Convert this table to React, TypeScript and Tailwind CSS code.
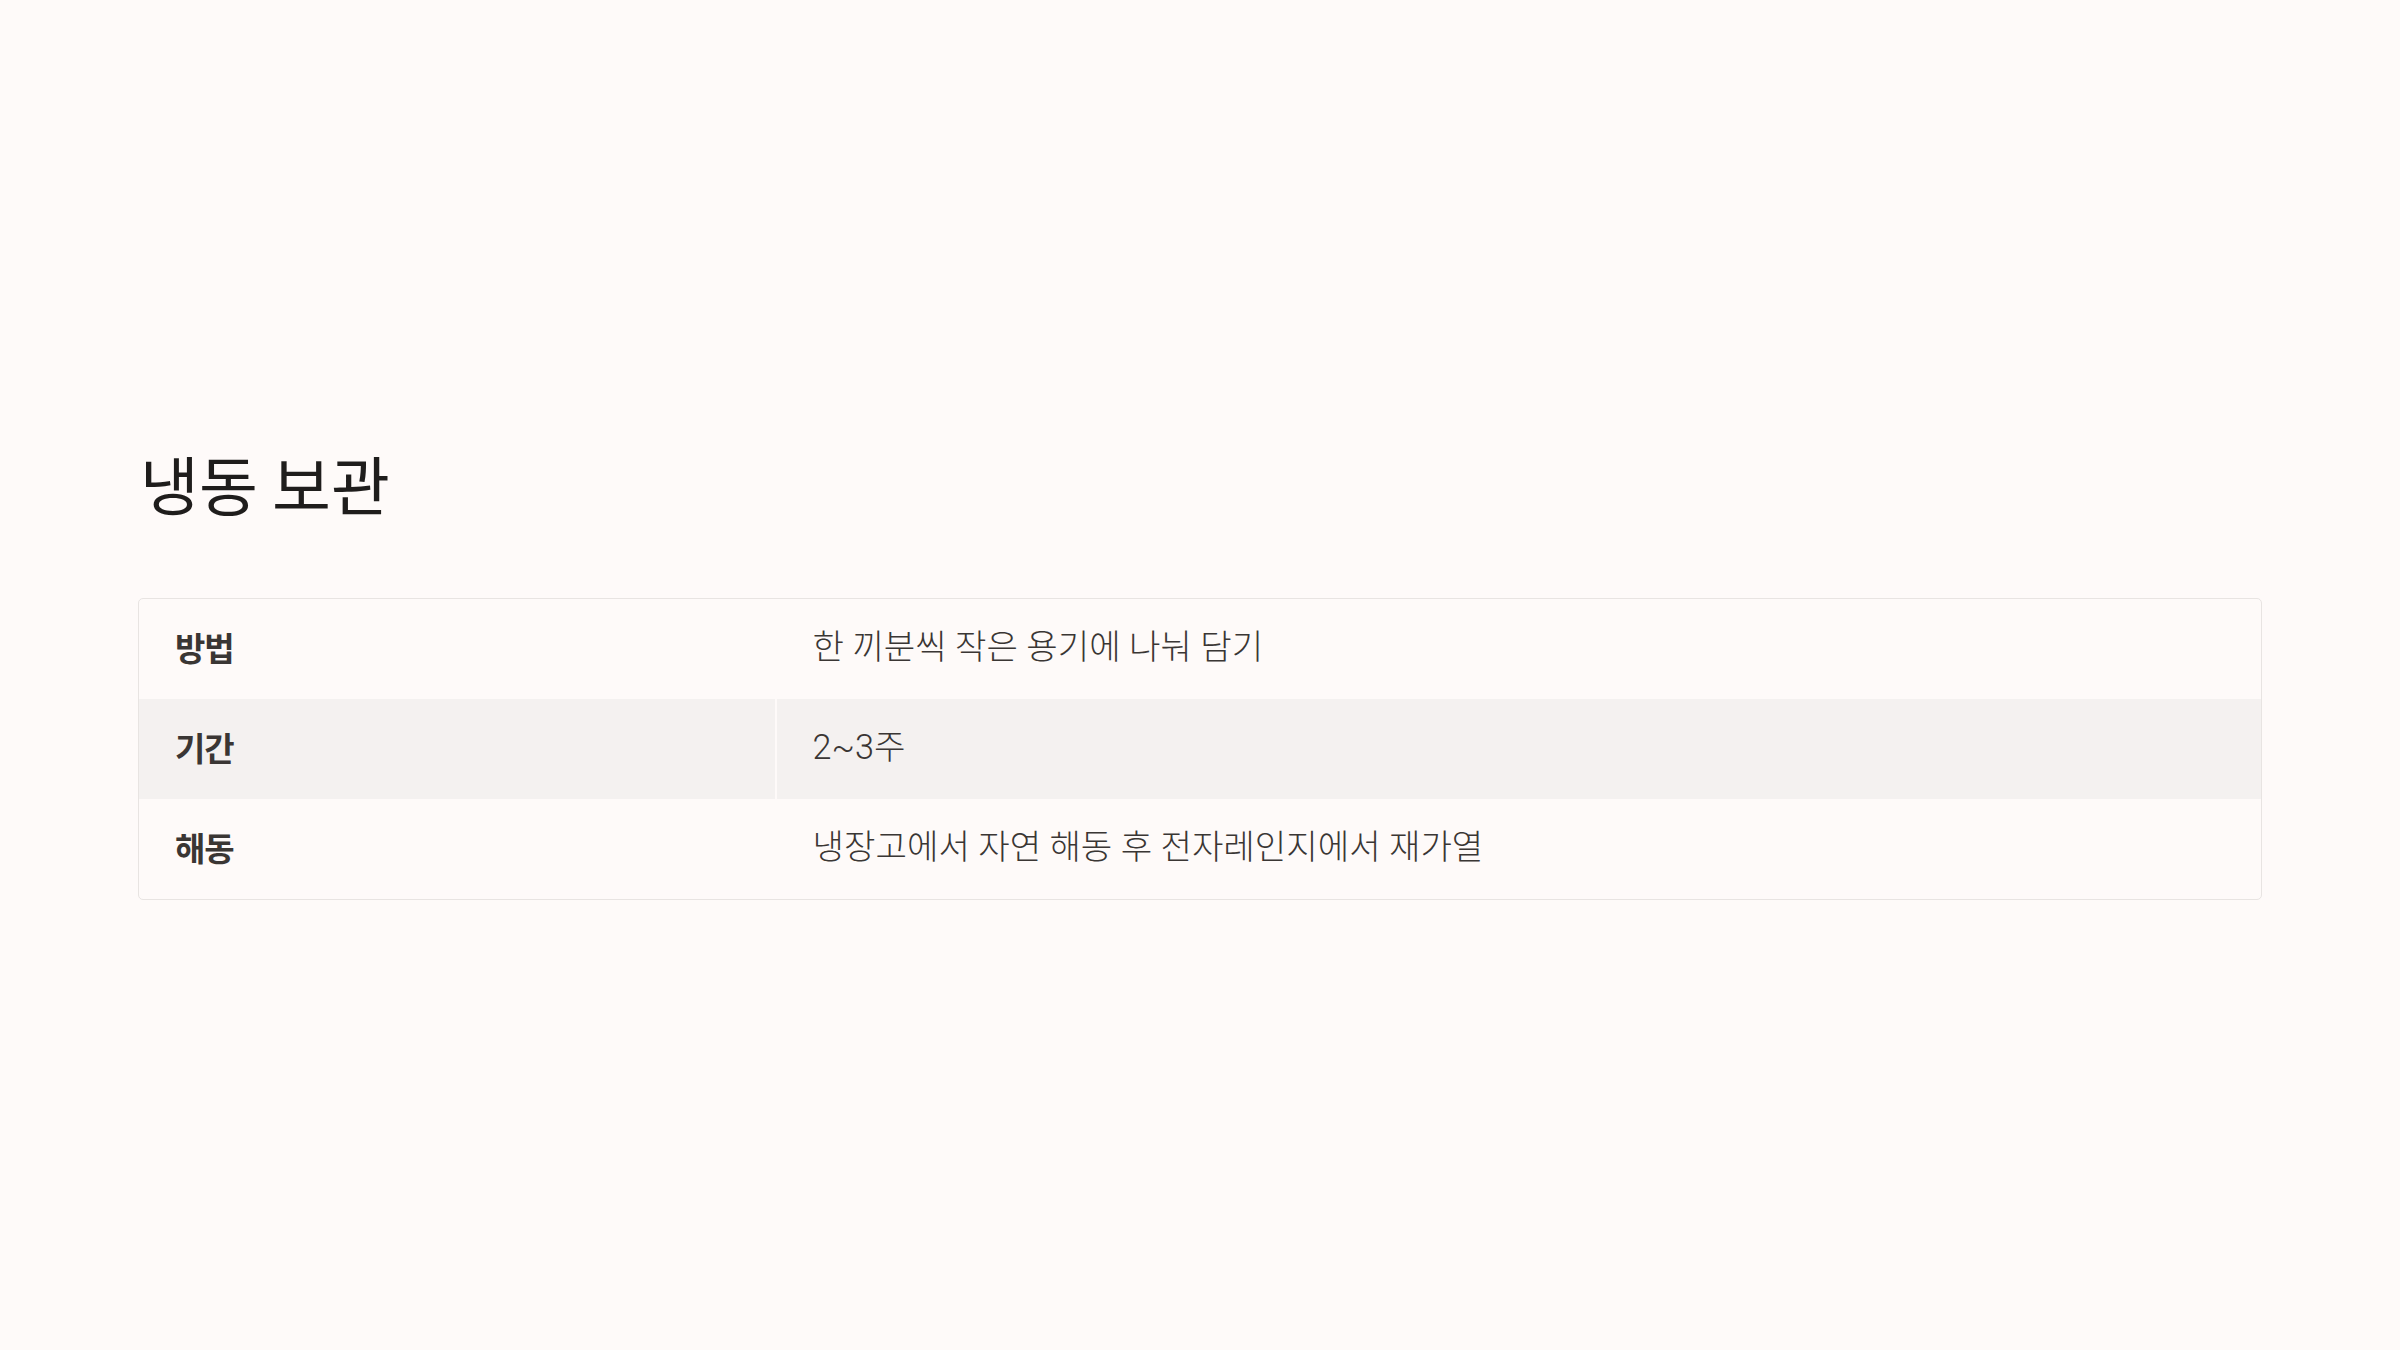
import React from "react";

const rows = [
  { label: "방법", value: "한 끼분씩 작은 용기에 나눠 담기" },
  { label: "기간", value: "2~3주" },
  { label: "해동", value: "냉장고에서 자연 해동 후 전자레인지에서 재가열" },
];

export default function App() {
  return (
    <div
      className="min-h-screen w-full bg-[#fefaf9] flex flex-col justify-center px-[138px] pb-[6px]"
      style={{ fontFamily: '"Noto Sans CJK KR", "Noto Sans", sans-serif' }}
    >
      <h1 className="text-[64px] leading-[1.2] font-normal text-[#1f1d1c] mb-[77px] pl-[2px]">
        냉동 보관
      </h1>
      <div className="w-full rounded-[5px] border border-[#e8e4e2] overflow-hidden">
        <table className="w-full border-collapse table-fixed">
          <tbody>
            {rows.map((r, i) => (
              <tr key={r.label} className={i === 1 ? "bg-[#f4f1f0]" : ""}>
                <td className="w-[30%] h-[100px] px-[36px] pb-[3px] align-middle text-[33px] font-bold text-[#3a3634] tracking-[-0.03em] border-r-2 border-[#fefaf9]">
                  {r.label}
                </td>
                <td className="h-[100px] px-[36px] pb-[3px] align-middle text-[34.2px] font-light text-[#3a3634] font-['Roboto','Noto_Sans_CJK_KR',sans-serif]">
                  {r.value}
                </td>
              </tr>
            ))}
          </tbody>
        </table>
      </div>
    </div>
  );
}
